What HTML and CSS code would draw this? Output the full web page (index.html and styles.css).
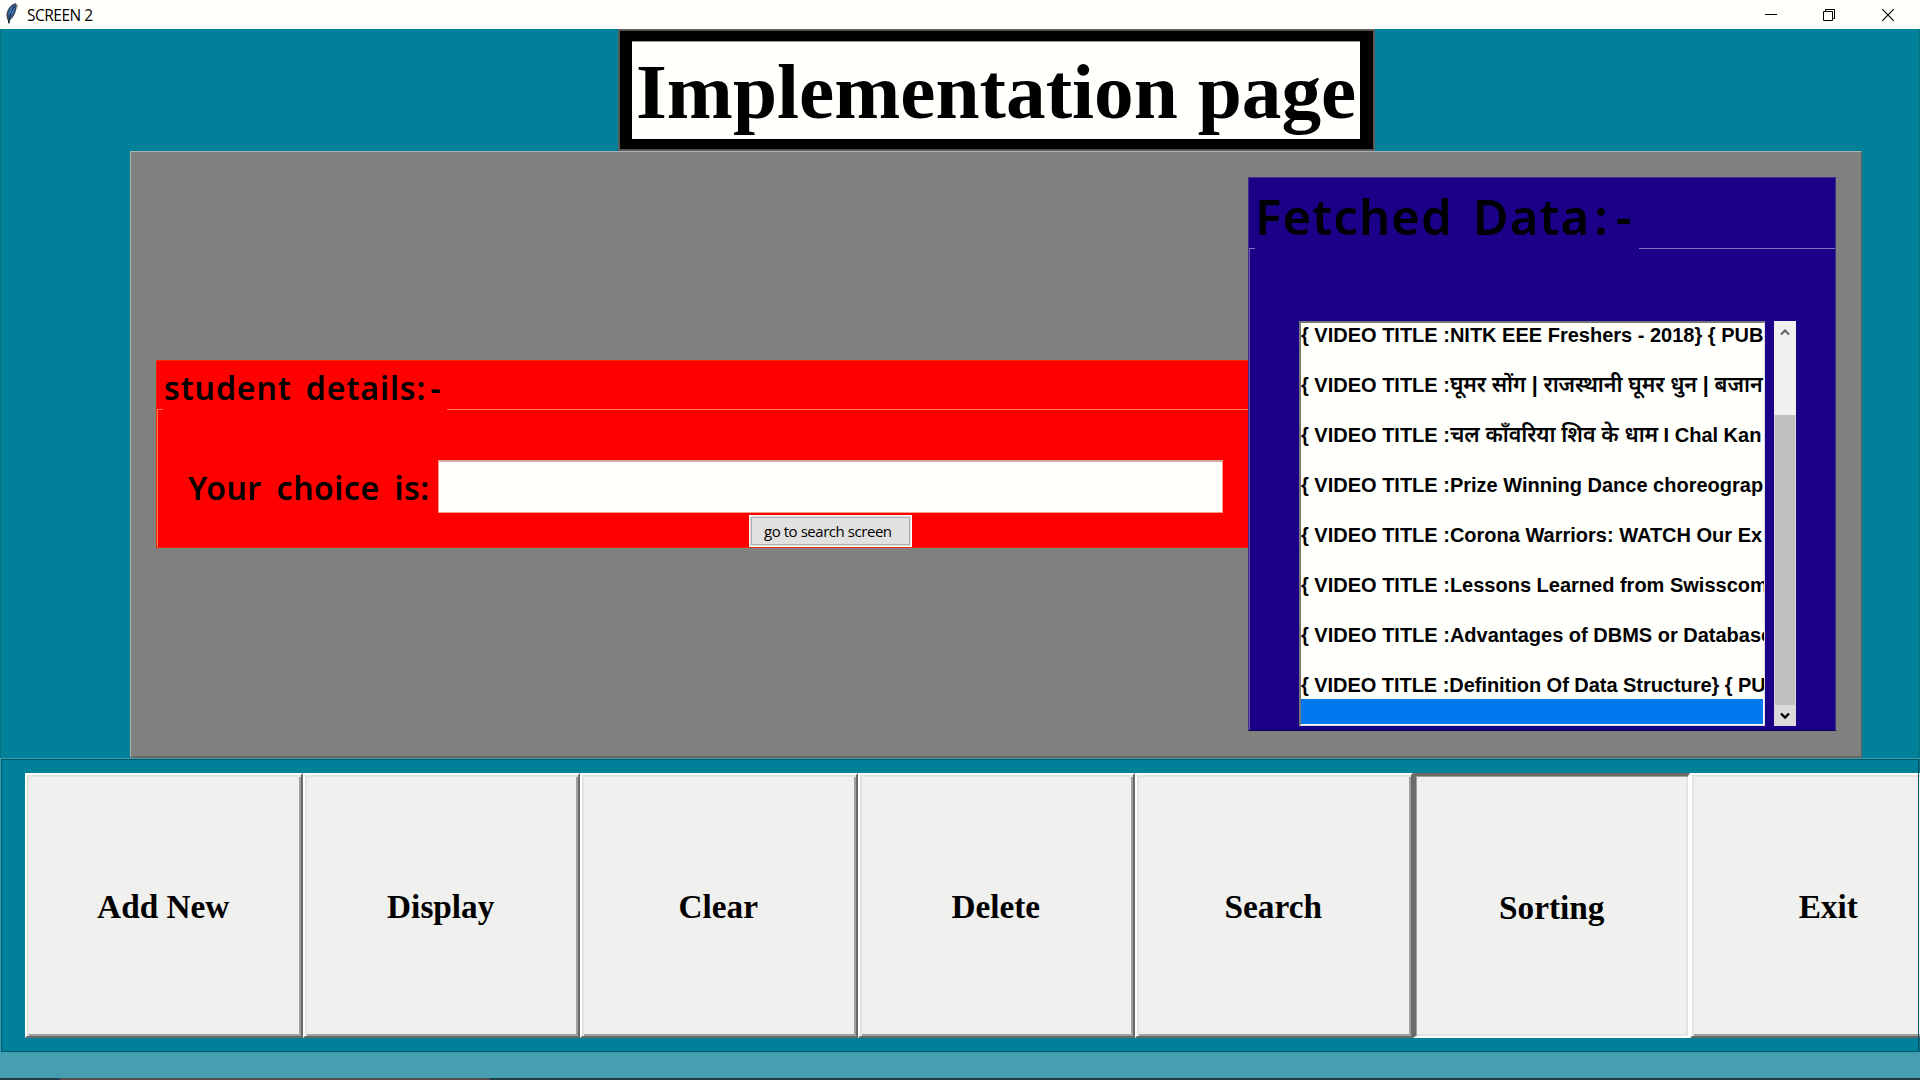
FILE: index.html
```html
<!DOCTYPE html>
<html lang="en">
<head>
<meta charset="utf-8">
<title>SCREEN 2</title>
<link rel="stylesheet" href="styles.css">
</head>
<body>
<div class="window">
  <header class="titlebar">
    <svg class="feather" width="14" height="22" viewBox="0 0 14 22">
      <path d="M11 .8C7 1 3.500 5 2.200 10C1.700 12.500 2.200 15 3.200 17L3.800 20L4.800 16.500C8 15 10.500 9 11.300 3.500Z" fill="#315b94" stroke="#30343c" stroke-width="1"/>
      <path d="M9 3C6 6 4.500 9 4 12L5.500 10L5 14L8.500 8Z" fill="#5b9be6"/>
      <path d="M9.500 3C6 8 4.500 13 3.800 20.500" fill="none" stroke="#1b2434" stroke-width="1.100"/>
      <path d="M11 1L12.500 2L11.500 6" fill="none" stroke="#a9a58f" stroke-width="1"/>
    </svg>
    <span class="titlebar-text">SCREEN 2</span>
    <div class="controls">
      <svg class="minimize" width="12" height="12" viewBox="0 0 12 12"><path d="M0 5.500H12" stroke="#000"/></svg>
      <svg width="12" height="12" viewBox="0 0 12 12" fill="none" stroke="#000"><path d="M.5 2.500H9.500V11.500H.5ZM2.500 2.500V.5H11.500V9.500H9.500"/></svg>
      <svg width="12" height="12" viewBox="0 0 12 12"><path d="M.3.3L11.700 11.700M11.700.3L.3 11.700" stroke="#000" stroke-width="1.200"/></svg>
    </div>
  </header>

  <main class="client">
    <h1 class="banner"><span>Implementation page</span></h1>

    <section class="body-frame">
      <div class="student">
        <div class="legend-row student-legend"><i class="rule lead"></i><span class="legend">student details<span class="tail">:-</span></span><i class="rule rest"></i></div>
        <div class="student-body">
          <div class="choice"><span class="choice-label">Your choice is:</span><span class="entry"></span></div>
          <div class="go">go to search screen</div>
        </div>
      </div>
      <div class="fetched">
        <div class="legend-row fetched-legend"><i class="rule lead"></i><span class="legend">Fetched Data<span class="tail">:-</span></span><i class="rule rest"></i></div>
        <div class="fetched-body">
          <div class="listbox">
            <div class="item">{ VIDEO TITLE :NITK EEE Freshers - 2018} { PUB</div>
            <div class="item">{ VIDEO TITLE :<span class="hindi">घूमर सोंग | राजस्थानी घूमर धुन | बजान</span></div>
            <div class="item">{ VIDEO TITLE :<span class="hindi">चल काँवरिया शिव के धाम</span> I Chal Kan</div>
            <div class="item">{ VIDEO TITLE :Prize Winning Dance choreograp</div>
            <div class="item">{ VIDEO TITLE :Corona Warriors: WATCH Our Ex</div>
            <div class="item">{ VIDEO TITLE :Lessons Learned from Swisscom</div>
            <div class="item">{ VIDEO TITLE :Advantages of DBMS or Database</div>
            <div class="item last">{ VIDEO TITLE :Definition Of Data Structure} { PU</div>
            <div class="selected"></div>
          </div>
          <div class="scrollbar">
            <svg class="arrow up" width="21" height="21" viewBox="0 0 21 21"><path d="M6.500 13.500L10.500 9.500L14.500 13.500" fill="none" stroke="#606060" stroke-width="2"/></svg>
            <div class="track"></div>
            <div class="thumb"></div>
            <svg class="arrow down" width="21" height="21" viewBox="0 0 21 21"><path d="M6.500 8.500L10.500 12.500L14.500 8.500" fill="none" stroke="#000" stroke-width="2.300"/></svg>
          </div>
        </div>
      </div>
    </section>

    <nav class="button-frame">
      <div class="btn">Add New</div>
      <div class="btn">Display</div>
      <div class="btn">Clear</div>
      <div class="btn">Delete</div>
      <div class="btn">Search</div>
      <div class="btn sunken">Sorting</div>
      <div class="btn">Exit</div>
    </nav>
    <div class="footer"></div>
    <div class="taskbar-edge"></div>
  </main>
</div>
</body>
</html>
```
FILE: styles.css
```css
* { box-sizing: border-box; }
body { margin: 0; background: #008099; color: #000; overflow: hidden; }
.window { width: 1920px; height: 1080px; overflow: hidden; display: flex; flex-direction: column; }

.titlebar { height: 29px; flex: none; display: flex; align-items: center; background: #fffffc; padding: 0 26px 0 5px; }
.feather { margin-top: -1px; }
.titlebar-text { margin: 0 0 0 8px; font: 15.5px/28px "Open Sans", "Noto Sans", sans-serif; letter-spacing: -0.5px; }
.controls { margin-left: auto; display: flex; gap: 47px; }
.controls svg { display: block; }
.controls .minimize { margin-right: -1px; }

.client { flex: 1; display: flex; flex-direction: column; align-items: center; background: #008099; box-shadow: inset 1px 0 #00707f, inset -1px 0 #00707f; }
.banner { margin: 0 0 0 73px; width: 757px; height: 122px; flex: none; padding: 11px 14px 11px 13px; background: #000; border: 1px solid #606060; outline: 1px solid #555; outline-offset: -2px; display: flex; }
.banner span { flex: 1; height: 98px; background: #fffffc; border-top: 1px solid #999; font: bold 79.3px/98px "Liberation Serif", serif; white-space: nowrap; padding: 0 0 0 4px; }

.body-frame { width: 1732px; height: 607px; margin-left: 72px; flex: none; background: #80807e; border: 1px solid #a9b3b2; border-right-color: #586666; border-bottom: 2px solid #656865; display: flex; align-items: center; padding: 0 25px; }
.legend-row { display: flex; align-items: flex-end; }
.legend-row .legend { white-space: nowrap; flex: none; height: 100%; }
.rule { height: 1px; flex: none; }
.lead { width: 6px; }
.rest { flex: 1; }

.student { width: 1092px; height: 188px; flex: none; background: #f00; border: 1px solid #f32a00; border-right: 0; }
.student-legend { height: 49px; }
.student .rule { background: #ff7a52; }
.student .legend { width: 284px; padding-left: 1px; font: 600 32px/54px "Comic Sans MS", "Noto Sans", sans-serif; letter-spacing: 0.9px; word-spacing: 5px; }
.student .tail { letter-spacing: 5px; }
.student-body { height: 137px; border-left: 1px solid #ff7a52; padding: 50px 25px 0 30px; display: flex; flex-direction: column; }
.choice { display: flex; height: 53px; }
.choice-label { flex: 1; font: 600 32px/56px "Comic Sans MS", "Noto Sans", sans-serif; white-space: nowrap; letter-spacing: 0.5px; word-spacing: 6px; }
.entry { width: 785px; background: #fffffc; border: 1px solid #ff9a86; border-top: 2px solid #d8a8a0; }
.go { width: 163px; height: 32px; margin: 2px 0 0 561px; background: #e1e1df; border: 1px solid #fff; outline: 1px solid #adadad; outline-offset: -3px; font: 15px/30px "Open Sans", "Noto Sans", sans-serif; padding-left: 14px; letter-spacing: -0.45px; white-space: nowrap; }

.fetched { width: 588px; height: 554px; flex: none; background: #1b0088; border: 1px solid #40308c; border-bottom-color: #0d0050; }
.fetched-legend { height: 71px; }
.fetched .rule { background: #8270bd; }
.fetched .legend { width: 384px; font: 600 49px/76px "Comic Sans MS", "Noto Sans", sans-serif; letter-spacing: 1.1px; word-spacing: 6px; }
.fetched .tail { letter-spacing: 8px; margin-left: 4px; }
.fetched-body { height: 481px; border-left: 1px solid #6655ad; padding: 72px 39px 0 49px; display: flex; justify-content: space-between; }
.listbox { width: 466px; height: 405px; background: #fffffc; border: 2px solid #777; border-right: 1px solid #ddd; border-bottom: 1px solid #ddd; overflow: hidden; padding: 1px 1px 0 0; }
.item { height: 50px; font: bold 20px/23px "Liberation Sans", "Noto Sans Devanagari", sans-serif; white-space: nowrap; }
.item.last { height: 25px; letter-spacing: -0.04px; }
.hindi { font-size: 21.5px; font-weight: 600; line-height: 20px; letter-spacing: -0.1px; }
.selected { height: 25px; background: #0078ee; }
.scrollbar { width: 22px; height: 405px; background: #dadad9; display: flex; flex-direction: column; }
.arrow { display: block; flex: none; width: 22px; }
.up { background: #f0f0ef; }
.track { height: 73px; background: #f0f0ef; }
.thumb { height: 290px; background: #c0c0bf; margin: 0 1px; }

.button-frame { width: 1920px; height: 295px; flex: none; padding: 14px 0 0 24px; border: solid #3aa0af; border-width: 1px 0 1px 1px; outline: 1px solid #005766; outline-offset: -2px; display: flex; overflow: hidden; }
.btn { width: 277.5px; height: 265px; flex: none; background: #f0f0ee; font: bold 33.3px/264px "Liberation Serif", serif; text-align: center; padding-right: 1px; border: 2px solid; border-color: #fff #696969 #696969 #fff; box-shadow: inset 2px 2px #e3e3e1, inset -2px -2px #a0a09e; }
.sunken { border-width: 3px 2px 2px 3px; border-color: #6b6b6a #fff #fff #6b6b6a; box-shadow: inset 1px 1px #a0a09e, inset -2px -2px #e3e3e1; line-height: 264px; padding-right: 0; }
.footer { width: 1920px; height: 25px; flex: none; background: #459fb0; }
.taskbar-edge { width: 1920px; height: 2px; flex: none; background: linear-gradient(90deg, #203e49 60px, #544d4a 60px 490px, #203e49 490px); }
```
